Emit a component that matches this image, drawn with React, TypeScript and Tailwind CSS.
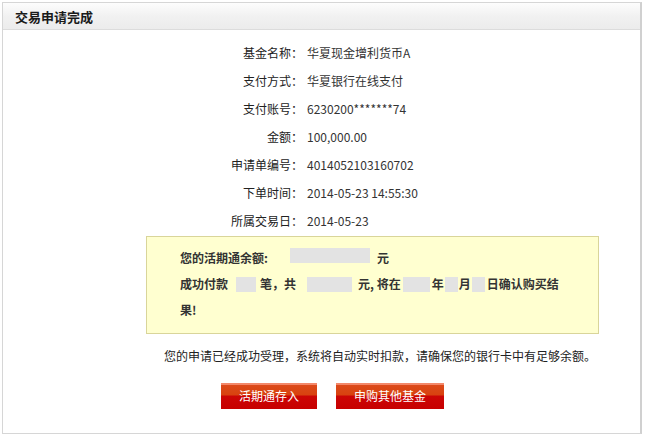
import React from "react";

const font = { fontFamily: '"Noto Sans CJK SC", "Noto Sans", sans-serif' };

const rows: [string, string][] = [
  ["基金名称：", "华夏现金增利货币A"],
  ["支付方式：", "华夏银行在线支付"],
  ["支付账号：", "6230200*******74"],
  ["金额：", "100,000.00"],
  ["申请单编号：", "4014052103160702"],
  ["下单时间：", "2014-05-23 14:55:30"],
  ["所属交易日：", "2014-05-23"],
];

function Blank({ w }: { w: string }) {
  return <span className={`inline-block h-[15px] bg-[#e3e3e3] ${w}`} />;
}

export default function App() {
  return (
    <div className="w-[645px] h-[439px] bg-white pt-[2px] pl-[2px]" style={font}>
      <div className="w-[640px] h-[432px] border border-[#d6d6d6] border-r-2 border-r-[#d0d0d0] bg-white">
        <div className="h-[27px] border-b border-[#dcdcdc] bg-[linear-gradient(#fdfdfd,#f1f1f1_50%,#ececec)] flex items-center pl-[12px]">
          <span className="text-[13px] font-bold text-[#1a1a1a] leading-none">交易申请完成</span>
        </div>
        <div className="pt-[9px]">
          {rows.map(([k, v]) => (
            <div key={k} className="flex h-[28px] items-center text-[12px] text-[#222]">
              <div className="w-[300px] text-right">{k}</div>
              <div className="pl-[4px] text-[#333]">{v}</div>
            </div>
          ))}
          <div className="ml-[143px] mt-[1px] w-[453px] h-[98px] border border-[#d9d59a] bg-[#ffffd0] pl-[33px] pt-[8px] text-[12px] font-bold text-[#333] leading-[26px]">
            <div className="flex items-center h-[26px]">
              <span>您的活期通余额:</span>
              <span className="ml-[22px]"><Blank w="w-[80px]" /></span>
              <span className="ml-[7px]">元</span>
            </div>
            <div className="flex items-center h-[26px] whitespace-nowrap">
              <span>成功付款</span>
              <span className="ml-[8px] flex"><Blank w="w-[20px]" /></span>
              <span className="ml-[4px]">笔，共</span>
              <span className="ml-[11px] flex"><Blank w="w-[45px]" /></span>
              <span className="ml-[6px]">元, 将在</span>
              <span className="ml-[2px] flex"><Blank w="w-[27px]" /></span>
              <span className="ml-[2px]">年</span>
              <span className="ml-[1px] flex"><Blank w="w-[13px]" /></span>
              <span className="ml-[1px]">月</span>
              <span className="ml-[1px] flex"><Blank w="w-[13px]" /></span>
              <span className="ml-[2px]">日确认购买结</span>
            </div>
            <div className="h-[26px] flex items-center">果!</div>
          </div>
          <div className="ml-[161px] mt-[14px] text-[12px] text-[#222] leading-[16px]">
            您的申请已经成功受理，系统将自动实时扣款，请确保您的银行卡中有足够余额。
          </div>
          <div className="flex ml-[218px] mt-[19px] gap-[19px]">
            <button className="w-[96px] h-[26px] text-white text-[12px] bg-[linear-gradient(#f3886a_0,#f3886a_2px,#dc4a1b_2px,#d8420f_12px,#cc0606_13px,#c70000_100%)] flex items-center justify-center">
              活期通存入
            </button>
            <button className="w-[108px] h-[26px] text-white text-[12px] bg-[linear-gradient(#f3886a_0,#f3886a_2px,#dc4a1b_2px,#d8420f_12px,#cc0606_13px,#c70000_100%)] flex items-center justify-center">
              申购其他基金
            </button>
          </div>
        </div>
      </div>
    </div>
  );
}
